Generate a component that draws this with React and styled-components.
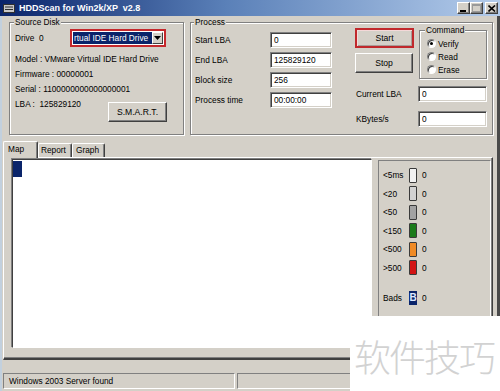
import React from 'react';
import styled, { createGlobalStyle } from 'styled-components';

const FACE = '#d4d0c8';

const GlobalStyle = createGlobalStyle`
  html, body { margin: 0; padding: 0; background: #fff; }
  body { width: 500px; height: 391px; overflow: hidden; }
  * { box-sizing: border-box; }
`;

const Window = styled.div`
  position: relative;
  width: 500px;
  height: 391px;
  background: ${FACE};
  display: flex;
  flex-direction: column;
  overflow: hidden;
  font-family: "Liberation Sans", Arial, sans-serif;
  font-size: 8.3px;
  color: #000;
`;

const TitleBar = styled.div`
  height: 16px;
  flex: none;
  display: flex;
  align-items: center;
  padding: 0 2px 0 3px;
  background: linear-gradient(to right, #0a246a 0%, #5a80b8 45%, #b4cceb 100%);
`;

const TitleText = styled.span`
  margin-left: 4px;
  color: #fff;
  font-weight: bold;
  font-size: 9px;
  white-space: pre;
`;

const CaptionGroup = styled.div`
  margin-left: auto;
  display: flex;
  align-items: center;
`;

const CaptionButton = styled.div`
  width: 13px;
  height: 12px;
  margin-left: ${p => p.$gap || 0}px;
  background: ${FACE};
  border: 1px solid;
  border-color: #fff #404040 #404040 #fff;
  box-shadow: inset -1px -1px 0 #808080;
  display: flex;
  align-items: center;
  justify-content: center;
`;

const Body = styled.div`
  flex: 1;
  display: flex;
  flex-direction: column;
  border-left: 2px solid #c2d0de;
  border-right: 3px solid #4a4a4a;
  min-height: 0;
`;

const TopRow = styled.div`
  height: 119px;
  flex: none;
  display: flex;
  padding-top: 2px;
`;

const GroupBox = styled.fieldset`
  margin: 0;
  padding: 0 0 0 ${p => p.$pl ?? 5}px;
  border: 1px solid #808080;
  box-shadow: inset 1px 1px 0 #fff, 1px 1px 0 #fff;
  min-width: 0;
`;

const SourceBox = styled(GroupBox)`
  width: 175px;
  margin-left: 7px;
  display: flex;
  flex-direction: column;
`;

const ProcessBox = styled(GroupBox)`
  flex: 1;
  margin-left: 6px;
  margin-right: 4px;
  display: flex;
`;

const CommandBox = styled(GroupBox)`
  width: 69px;
  padding: 3px 0 2px 6px;
`;

const Legend = styled.legend`
  padding: 0 1px;
  margin-left: -1px;
  line-height: 8px;
  font-size: 8.3px;
  background: ${FACE};
`;

const DriveRow = styled.div`
  display: flex;
  align-items: center;
  height: 18px;
  margin-top: 3px;
`;

const FieldLabel = styled.span`
  width: ${p => p.$w}px;
  flex: none;
  white-space: pre;
`;

const Annotated = styled.div`
  border: 2px solid #c4282c;
  display: flex;
  padding: 0;
`;

const Combo = styled.div`
  width: 92px;
  height: 14px;
  background: #fff;
  display: flex;
  align-items: stretch;
  padding: 1px;
`;

const ComboText = styled.div`
  flex: 1;
  background: #0a246a;
  color: #fff;
  white-space: nowrap;
  overflow: hidden;
  line-height: 12px;
  padding-left: 1px;
`;

const ComboArrow = styled.div`
  width: 11px;
  flex: none;
  background: ${FACE};
  border: 1px solid;
  border-color: #fff #404040 #404040 #fff;
  display: flex;
  align-items: center;
  justify-content: center;
`;

const InfoLine = styled.div`
  line-height: 15px;
  white-space: pre;
  margin-top: ${p => p.$mt || 0}px;
`;

const LbaRow = styled.div`
  display: flex;
  align-items: flex-start;
  justify-content: space-between;
  padding-right: 16px;
`;

const Button = styled.div`
  width: ${p => p.$w}px;
  height: 20px;
  margin-top: ${p => p.$mt || 0}px;
  background: ${FACE};
  border: 1px solid;
  border-color: #fff #404040 #404040 #fff;
  box-shadow: inset -1px -1px 0 #808080;
  display: flex;
  align-items: center;
  justify-content: center;
  font-size: 8.6px;
`;

const RedButton = styled(Button)`
  border: 2px solid #c0282c;
  box-shadow: inset 1px 1px 0 #f4d8d8, inset -1px -1px 0 #a89c98;
`;

const LabelGrid = styled.div`
  display: grid;
  grid-template-columns: 75px 62px;
  grid-auto-rows: 16px;
  row-gap: 4px;
  align-items: center;
  margin-top: 6px;
  align-self: flex-start;
`;

const Field = styled.div`
  width: ${p => p.$w}px;
  height: 16px;
  background: #fff;
  border: 1px solid;
  border-color: #808080 #fff #fff #808080;
  box-shadow: inset 1px 1px 0 #404040, inset -1px -1px 0 ${FACE};
  padding-left: 3px;
  line-height: 14px;
  white-space: nowrap;
`;

const RightArea = styled.div`
  margin-left: 23px;
  width: 132px;
  display: flex;
  flex-direction: column;
`;

const ControlTop = styled.div`
  display: flex;
  gap: 5px;
`;

const ButtonColumn = styled.div`
  display: flex;
  flex-direction: column;
`;

const RadioList = styled.div`
  display: flex;
  flex-direction: column;
  padding-left: 1px;
`;

const RadioRow = styled.div`
  height: 13px;
  display: flex;
  align-items: center;
  gap: 2px;
`;

const RadioDot = styled.span`
  width: 9px;
  height: 9px;
  border-radius: 50%;
  background: #fff;
  border: 1px solid;
  border-color: #808080 #fff #fff #808080;
  box-shadow: inset 1px 1px 0 #404040;
  display: flex;
  align-items: center;
  justify-content: center;
  &::after {
    content: '';
    width: 3px;
    height: 3px;
    border-radius: 50%;
    background: ${p => (p.$on ? '#000' : 'transparent')};
  }
`;

const StatRow = styled.div`
  display: flex;
  align-items: center;
  padding-left: 1px;
  margin-top: ${p => p.$mt}px;
`;

const TabStrip = styled.div`
  display: flex;
  align-items: flex-end;
  height: 16px;
  margin-top: 6px;
  padding-left: 1px;
  flex: none;
  position: relative;
  z-index: 1;
`;

const Tab = styled.div`
  width: ${p => p.$w}px;
  height: ${p => (p.$active ? 17 : 14)}px;
  margin-bottom: ${p => (p.$active ? -1 : 0)}px;
  padding-left: ${p => p.$pl}px;
  background: ${FACE};
  border-top: 1px solid #fff;
  border-left: 1px solid #fff;
  border-right: 1px solid #404040;
  box-shadow: inset -1px 0 0 #808080;
  border-top-left-radius: 2px;
  border-top-right-radius: 2px;
  line-height: ${p => (p.$active ? 14 : 13)}px;
`;

const TabPanel = styled.div`
  height: 203px;
  flex: none;
  margin: 0 4px 0 1px;
  border: 1px solid;
  border-color: #fff #404040 #404040 #fff;
  border-bottom-width: 2px;
  box-shadow: inset -1px -1px 0 #808080;
  display: flex;
  gap: 6px;
  padding: 1px 1px 10px 8px;
`;

const MapArea = styled.div`
  flex: 1;
  background: #fff;
  border: 1px solid;
  border-color: #404040 #fff #fff #404040;
  box-shadow: -1px -1px 0 #808080;
  padding-top: 1px;
`;

const MapCell = styled.div`
  width: 9px;
  height: 16px;
  background: #0a246a;
`;

const LegendPanel = styled.div`
  width: 113px;
  margin-top: 1px;
  border: 1px solid;
  border-color: #808080 #fff #fff #808080;
  padding: 5px 0 0 4px;
  display: flex;
  flex-direction: column;
`;

const LegendRow = styled.div`
  height: 18.5px;
  display: flex;
  align-items: center;
  margin-top: ${p => p.$mt || 0}px;
`;

const LegendLabel = styled.span`
  width: 26px;
`;

const Swatch = styled.span`
  width: 8px;
  height: 15px;
  background: ${p => p.$c};
  border: 1px solid #3a3a3a;
  border-radius: 1px;
`;

const BadSwatch = styled.span`
  width: 8px;
  height: 14px;
  background: #0a246a;
  color: #dfe8ff;
  font-weight: bold;
  font-size: 10px;
  line-height: 14px;
  text-align: center;
`;

const LegendValue = styled.span`
  margin-left: 5px;
`;

const ProgressArea = styled.div`
  height: 12px;
  flex: none;
`;

const StatusBar = styled.div`
  height: 19px;
  flex: none;
  display: flex;
  gap: 2px;
  padding: 1px 0 0 1px;
`;

const StatusPanel = styled.div`
  width: ${p => (p.$w ? `${p.$w}px` : 'auto')};
  flex: ${p => (p.$w ? 'none' : 1)};
  height: 16px;
  border: 1px solid;
  border-color: #808080 #fff #fff #808080;
  padding-left: 5px;
  line-height: 14px;
  white-space: nowrap;
`;

const Watermark = styled.div`
  position: absolute;
  left: 350px;
  top: 316px;
  width: 150px;
  height: 75px;
  background: #fff;
  color: #d2d2d2;
  font-family: "Noto Sans CJK SC", sans-serif;
  font-weight: 300;
  font-size: 37px;
  letter-spacing: -2px;
  line-height: 80px;
  padding-left: 4px;
  white-space: nowrap;
`;

const AppIcon = () => (
  <svg width="12" height="9" viewBox="0 0 12 9">
    <rect x="0.5" y="0.5" width="11" height="8" fill="#c8c8c8" stroke="#303030" />
    <line x1="2" y1="3" x2="10" y2="3" stroke="#303030" />
    <line x1="2" y1="5.5" x2="10" y2="5.5" stroke="#303030" />
  </svg>
);

const legendItems = [
  ['<5ms', '#f2f2f2'],
  ['<20', '#d2d2d2'],
  ['<50', '#a2a2a2'],
  ['<150', '#1a7a1a'],
  ['<500', '#f08a24'],
  ['>500', '#d21414'],
];

export default function App() {
  return (
    <>
      <GlobalStyle />
      <Window>
        <TitleBar>
          <AppIcon />
          <TitleText>HDDScan for Win2k/XP  v2.8</TitleText>
          <CaptionGroup>
            <CaptionButton>
              <svg width="7" height="7" viewBox="0 0 7 7">
                <rect x="0" y="5" width="6" height="2" fill="#000" />
              </svg>
            </CaptionButton>
            <CaptionButton>
              <svg width="9" height="8" viewBox="0 0 9 8">
                <rect x="0.5" y="0.5" width="8" height="7" fill="none" stroke="#9a9a9a" />
                <line x1="0" y1="1.5" x2="9" y2="1.5" stroke="#9a9a9a" />
              </svg>
            </CaptionButton>
            <CaptionButton $gap={2}>
              <svg width="8" height="7" viewBox="0 0 8 7">
                <path d="M0.5 0.5 L7 6.5 M7 0.5 L0.5 6.5" stroke="#000" strokeWidth="1.6" />
              </svg>
            </CaptionButton>
          </CaptionGroup>
        </TitleBar>

        <Body>
          <TopRow>
            <SourceBox>
              <Legend>Source Disk</Legend>
              <DriveRow>
                <FieldLabel $w={55}>Drive  0</FieldLabel>
                <Annotated>
                  <Combo>
                    <ComboText>rtual IDE Hard Drive</ComboText>
                    <ComboArrow>
                      <svg width="7" height="4" viewBox="0 0 7 4">
                        <path d="M0 0 H7 L3.5 4 Z" fill="#000" />
                      </svg>
                    </ComboArrow>
                  </Combo>
                </Annotated>
              </DriveRow>
              <InfoLine $mt={5}>Model : VMware Virtual IDE Hard Drive</InfoLine>
              <InfoLine>Firmware : 00000001</InfoLine>
              <InfoLine>Serial : 1100000000000000001</InfoLine>
              <LbaRow>
                <InfoLine>LBA :  125829120</InfoLine>
                <Button $w={59} $mt={5}>S.M.A.R.T.</Button>
              </LbaRow>
            </SourceBox>

            <ProcessBox $pl={4}>
              <Legend>Process</Legend>
              <LabelGrid>
                <span>Start LBA</span>
                <Field $w={62}>0</Field>
                <span>End LBA</span>
                <Field $w={62}>125829120</Field>
                <span>Block size</span>
                <Field $w={62}>256</Field>
                <span>Process time</span>
                <Field $w={62}>00:00:00</Field>
              </LabelGrid>
              <RightArea>
                <ControlTop>
                  <ButtonColumn>
                    <RedButton $w={59} $mt={2}>Start</RedButton>
                    <Button $w={58} $mt={5}>Stop</Button>
                  </ButtonColumn>
                  <CommandBox>
                    <Legend>Command</Legend>
                    <RadioList>
                      <RadioRow><RadioDot $on />Verify</RadioRow>
                      <RadioRow><RadioDot />Read</RadioRow>
                      <RadioRow><RadioDot />Erase</RadioRow>
                    </RadioList>
                  </CommandBox>
                </ControlTop>
                <StatRow $mt={7}>
                  <FieldLabel $w={62}>Current LBA</FieldLabel>
                  <Field $w={69}>0</Field>
                </StatRow>
                <StatRow $mt={9}>
                  <FieldLabel $w={62}>KBytes/s</FieldLabel>
                  <Field $w={69}>0</Field>
                </StatRow>
              </RightArea>
            </ProcessBox>
          </TopRow>

          <TabStrip>
            <Tab $active $w={35} $pl={4}>Map</Tab>
            <Tab $w={34} $pl={2}>Report</Tab>
            <Tab $w={33} $pl={3}>Graph</Tab>
          </TabStrip>
          <TabPanel>
            <MapArea>
              <MapCell />
            </MapArea>
            <LegendPanel>
              {legendItems.map(([label, color]) => (
                <LegendRow key={label}>
                  <LegendLabel>{label}</LegendLabel>
                  <Swatch $c={color} />
                  <LegendValue>0</LegendValue>
                </LegendRow>
              ))}
              <LegendRow $mt={12}>
                <LegendLabel>Bads</LegendLabel>
                <BadSwatch>B</BadSwatch>
                <LegendValue>0</LegendValue>
              </LegendRow>
            </LegendPanel>
          </TabPanel>
          <ProgressArea />
          <StatusBar>
            <StatusPanel $w={232}>Windows 2003 Server found</StatusPanel>
            <StatusPanel />
          </StatusBar>
        </Body>
        <Watermark>软件技巧</Watermark>
      </Window>
    </>
  );
}
